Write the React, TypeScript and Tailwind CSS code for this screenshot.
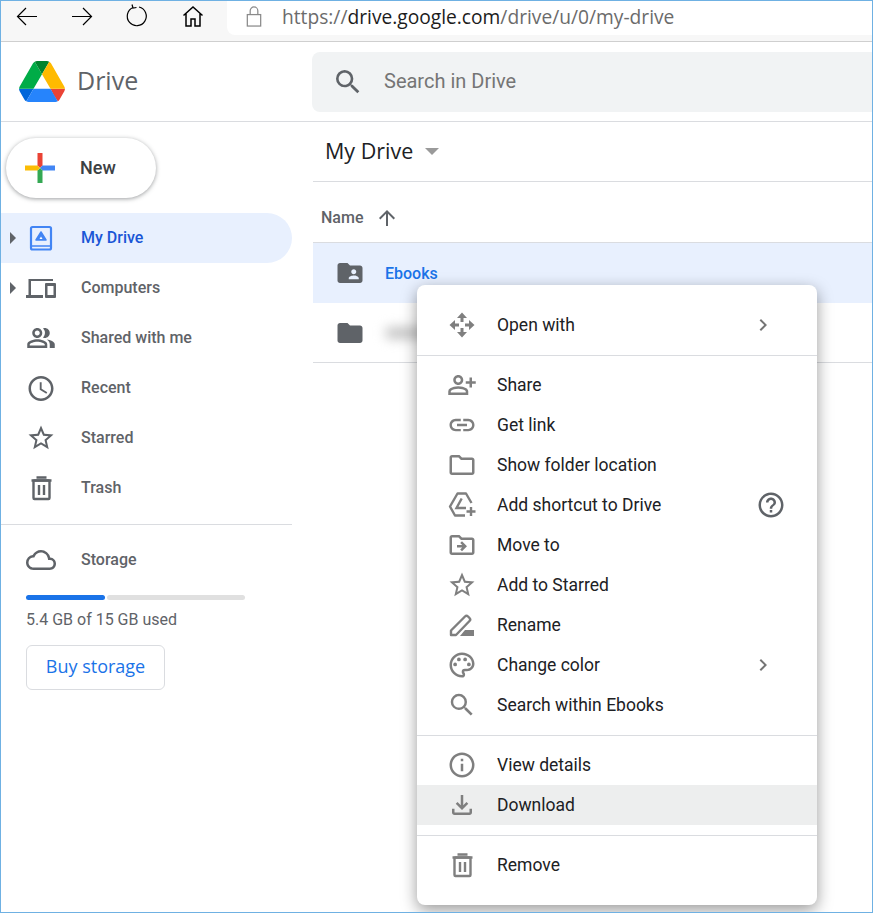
import type { ReactNode } from 'react';
import {
  MdAccessTime,
  MdArrowUpward,
  MdChevronRight,
  MdFolder,
  MdFolderShared,
  MdHelpOutline,
  MdInfoOutline,
  MdLink,
  MdOutlineCloud,
  MdOutlineDriveFileMove,
  MdOutlineFileDownload,
  MdOutlineFolder,
  MdOutlinePalette,
  MdOutlinePeopleAlt,
  MdOutlinePersonAddAlt,
  MdSearch,
  MdStarBorder,
} from 'react-icons/md';

function DriveLogo() {
  return (
    <svg viewBox="0 0 87.3 78" className="h-[41px] w-[46px]">
      <path d="m6.6 66.85 3.85 6.65c.8 1.4 1.95 2.5 3.3 3.3l13.75-23.8h-27.5c0 1.55.4 3.1 1.2 4.5z" fill="#0066da" />
      <path d="m43.65 25-13.75-23.8c-1.35.8-2.5 1.9-3.3 3.3l-25.4 44a9.06 9.06 0 0 0 -1.2 4.5h27.5z" fill="#00ac47" />
      <path d="m73.55 76.8c1.35-.8 2.5-1.9 3.3-3.3l1.6-2.75 7.65-13.25c.8-1.4 1.2-2.95 1.2-4.5h-27.502l5.852 11.5z" fill="#ea4335" />
      <path d="m43.65 25 13.75-23.8c-1.35-.8-2.9-1.2-4.5-1.2h-18.5c-1.6 0-3.15.45-4.5 1.2z" fill="#00832d" />
      <path d="m59.8 53h-32.3l-13.75 23.8c1.35.8 2.9 1.2 4.5 1.2h50.8c1.6 0 3.15-.45 4.5-1.2z" fill="#2684fc" />
      <path d="m73.4 26.5-12.7-22c-.8-1.4-1.95-2.5-3.3-3.3l-13.75 23.8 16.15 28h27.45c0-1.55-.4-3.1-1.2-4.5z" fill="#ffba00" />
    </svg>
  );
}

function NewPlus() {
  return (
    <svg viewBox="0 0 32 32" className="h-8 w-8">
      <path d="M13.5 1h5v12.5L16 16l-2.5-2.5z" fill="#ea4335" />
      <path d="M18.5 13.5H31v5H18.5L16 16z" fill="#4285f4" />
      <path d="M13.5 18.5 16 16l2.5 2.5V31h-5z" fill="#34a853" />
      <path d="M1 13.5h12.5L16 16l-2.5 2.5H1z" fill="#fbbc04" />
    </svg>
  );
}

function MyDriveIcon() {
  return (
    <svg viewBox="0 0 30 30" className="h-[30px] w-[30px]">
      <rect x="5" y="4" width="20" height="22.5" rx="1.5" fill="none" stroke="#4285f4" strokeWidth="2.2" />
      <path d="M5 23h20" stroke="#4285f4" strokeWidth="1.5" />
      <path d="M15 9l5 8h-10z" fill="#4285f4" stroke="#4285f4" strokeWidth="1.5" strokeLinejoin="round" />
      <path d="M15 13.5l1.500 2.500h-3z" fill="#fff" />
    </svg>
  );
}

function ComputersIcon() {
  return (
    <svg viewBox="0 0 30 30" className="h-[30px] w-[30px]" fill="#5f6368">
      <path d="M2.5 6H27v2H5v14h12v3H0v-3h2.5z" />
      <path fillRule="evenodd" d="M20 10h9a1 1 0 0 1 1 1v13a1 1 0 0 1-1 1h-9a1 1 0 0 1-1-1V11a1 1 0 0 1 1-1zm1.5 3v9h6v-9z" />
    </svg>
  );
}

function TrashIcon({ color }: { color: string }) {
  return (
    <svg viewBox="0 0 30 30" className="h-[30px] w-[30px]" fill="none" stroke={color} strokeWidth="2.4">
      <path d="M10.500 4.500h10M5.500 7.500h20" />
      <rect x="7.500" y="7.500" width="16" height="18.500" rx="1" />
      <path d="M13 12v10M18 12v10" />
    </svg>
  );
}

function OpenWithIcon() {
  return (
    <svg viewBox="0 0 30 30" className="h-[30px] w-[30px]" fill="#7f7f7f">
      <path d="M15 2.500l5 5.500h-3.500v4h-3V8H10z" />
      <path d="M15 27.500l5-5.500h-3.500v-4h-3v4H10z" />
      <path d="M2.500 15L8 10v3.500h4v3H8V20z" />
      <path d="M27.500 15L22 10v3.500h-4v3h4V20z" />
    </svg>
  );
}

function RenameIcon() {
  return (
    <svg viewBox="0 0 30 30" className="h-[30px] w-[30px]">
      <path
        d="M4 25v-4.500L18 6.500c1-1 2-1 3 0l1.500 1.500c1 1 1 2 0 3L9 25z"
        fill="none"
        stroke="#7f7f7f"
        strokeWidth="2.4"
        strokeLinejoin="round"
      />
      <path d="M13 26l5-6h9v6z" fill="#7f7f7f" />
    </svg>
  );
}

function ShortcutIcon() {
  return (
    <svg viewBox="0 0 30 30" className="h-[30px] w-[30px]" fill="none" stroke="#7f7f7f" strokeWidth="2.4">
      <path d="M24.500 13L19 3.500h-8.500L3 16.500l5 9h10" strokeLinejoin="round" />
      <path d="M14.700 8.500L9.500 18h9.500" />
      <path d="M24 17v9M19.500 21.500h9" />
    </svg>
  );
}

function Caret() {
  return <span className="ml-[9px] block h-0 w-0 border-y-[6px] border-l-[6px] border-y-transparent border-l-[#5f6368]" />;
}

function NavItem({ icon, label, caret, active }: { icon: ReactNode; label: string; caret?: boolean; active?: boolean }) {
  return (
    <div className={`flex h-[50px] w-[291px] items-center rounded-r-full ${active ? 'bg-[#e8f0fe]' : ''}`}>
      <div className="flex w-[25px] items-center">{caret && <Caret />}</div>
      <div className="flex w-[30px] items-center justify-center">{icon}</div>
      <span className={`ml-[25px] text-base font-medium ${active ? 'text-[#1a56d6]' : 'text-[#5f6368]'}`}>{label}</span>
    </div>
  );
}

function MenuItem({ icon, label, active, right }: { icon: ReactNode; label: string; active?: boolean; right?: ReactNode }) {
  return (
    <div className={`flex h-10 items-center pl-[30px] ${active ? 'bg-[#edeeee]' : ''}`}>
      <div className="flex w-[30px] items-center justify-center text-[#7f7f7f]">{icon}</div>
      <span className="ml-5 text-[17.5px] text-[#202124]">{label}</span>
      {right}
    </div>
  );
}

const Sub = () => <MdChevronRight size={24} className="absolute left-[334px] text-[#757575]" />;
const Divider = () => <div className="mb-[9px] mt-[10px] h-px bg-[#dadce0]" />;

export default function App() {
  return (
    <div className="relative flex h-[913px] w-[873px] flex-col overflow-hidden border border-[#6fb1e3] bg-white font-['Roboto',sans-serif]">
      {/* browser bar */}
      <div className="flex h-[41px] shrink-0 border-b border-[#cfcfcf] bg-[#f7f7f7]">
        <div className="flex w-[226px] items-start text-black">
          <svg viewBox="0 0 24 24" className="ml-[14px] mt-[3px] h-6 w-6" fill="none" stroke="currentColor" strokeWidth="1.2">
            <path d="M22 12.5H2.5M11 4l-8.5 8.500L11 21" />
          </svg>
          <svg viewBox="0 0 24 24" className="ml-[31px] mt-[3px] h-6 w-6" fill="none" stroke="currentColor" strokeWidth="1.2">
            <path d="M2 12.500h19.500M13 4l8.500 8.500L13 21" />
          </svg>
          <svg viewBox="0 0 24 24" className="ml-[31px] mt-[3px] h-6 w-6" fill="none" stroke="currentColor" strokeWidth="1.2">
            <path d="M8 3.500a9.500 9.500 0 1 0 6 -.5M7 .5l1 3.500 3.500 -.5" />
          </svg>
          <svg viewBox="0 0 24 24" className="ml-[32px] mt-[3px] h-6 w-6" fill="none" stroke="currentColor" strokeWidth="1.500">
            <path d="M2.500 11.500L12 3l9.500 8.500M5 9.500V22h5v-7h4v7h5V9.500" />
          </svg>
        </div>
        <div className="flex h-[34px] flex-1 items-center rounded-bl-lg bg-white">
          <svg viewBox="0 0 16 22" className="mb-[3px] ml-[19px] h-[21px] w-4" fill="none" stroke="#8a8a8a" strokeWidth="1.300">
            <rect x="1" y="9" width="14" height="12" />
            <path d="M4 9V5a4 4 0 0 1 8 0v4" />
          </svg>
          <span className="mb-[2px] ml-5 font-['Open_Sans',sans-serif] text-[19.2px] text-[#6b6b6b]">
            https://<span className="text-[#1c1c1c]">drive.google.com</span>/drive/u/0/my-drive
          </span>
        </div>
      </div>

      {/* app header */}
      <div className="flex h-[80px] shrink-0 items-center border-b border-[#dadce0]">
        <div className="flex w-[311px] items-center pl-[18px]">
          <DriveLogo />
          <span className="mb-[2px] ml-3 font-['Open_Sans',sans-serif] text-[25px] text-[#5f6368]">Drive</span>
        </div>
        <div className="flex h-[60px] flex-1 items-center rounded-l-lg bg-[#f1f3f4] pl-[20px]">
          <MdSearch size={32} className="text-[#5f6368]" />
          <span className="mb-[2px] ml-[20px] text-[20px] text-[#757575]">Search in Drive</span>
        </div>
      </div>

      <div className="flex flex-1">
        {/* sidebar */}
        <div className="w-[312px] shrink-0">
          <div className="ml-[5px] mt-4 flex h-[60px] w-[150px] items-center rounded-full bg-white pl-[18px] shadow-[0_1px_4px_rgba(60,64,67,0.5)]">
            <NewPlus />
            <span className="mb-px ml-[24px] text-lg font-medium text-[#3c4043]">New</span>
          </div>
          <div className="mt-[15px]">
            <NavItem active caret icon={<MyDriveIcon />} label="My Drive" />
            <NavItem caret icon={<ComputersIcon />} label="Computers" />
            <NavItem icon={<MdOutlinePeopleAlt size={32} className="text-[#5f6368]" />} label="Shared with me" />
            <NavItem icon={<MdAccessTime size={31} className="text-[#5f6368]" />} label="Recent" />
            <NavItem icon={<MdStarBorder size={30} className="text-[#5f6368]" />} label="Starred" />
            <NavItem icon={<TrashIcon color="#5f6368" />} label="Trash" />
          </div>
          <div className="mb-[10px] mt-[11px] h-px w-[291px] bg-[#dadce0]" />
          <NavItem icon={<MdOutlineCloud size={32} className="text-[#5f6368]" />} label="Storage" />
          <div className="ml-[25px] mt-[10px] flex h-[5px] w-[219px] gap-[2px]">
            <div className="h-full w-[79px] rounded-full bg-[#1a73e8]" />
            <div className="h-full flex-1 rounded-full bg-[#e0e0e0]" />
          </div>
          <div className="ml-[25px] mt-2 text-base text-[#5f6368]">5.4 GB of 15 GB used</div>
          <div className="ml-[25px] mt-[13px] flex h-[45px] w-[139px] items-center justify-center rounded-md border border-[#dadce0] pb-[3px] font-['Open_Sans',sans-serif] text-lg font-medium text-[#1a73e8]">
            Buy storage
          </div>
        </div>

        {/* file list */}
        <div className="flex-1">
          <div className="flex h-[60px] items-center border-b border-[#dadce0] pl-3">
            <span className="font-['Open_Sans',sans-serif] text-[21.5px] text-[#202124]">My Drive</span>
            <span className="ml-3 block h-0 w-0 border-x-[7px] border-t-[7px] border-x-transparent border-t-[#9a9a9a]" />
          </div>
          <div className="flex h-[61px] items-center border-b border-[#dadce0] pl-2 pt-3">
            <span className="text-base font-medium text-[#5f6368]">Name</span>
            <MdArrowUpward size={24} className="ml-3 text-[#5f6368]" />
          </div>
          <div className="flex h-[60px] items-center bg-[#e8f0fe] pl-[22px]">
            <MdFolderShared size={30} className="text-[#5f6368]" />
            <span className="ml-[20px] pt-px text-base font-medium text-[#1a73e8]">Ebooks</span>
          </div>
          <div className="flex h-[60px] items-center border-b border-[#dadce0] pl-[22px]">
            <MdFolder size={30} className="text-[#5f6368]" />
            <div className="ml-[20px] h-3 w-16 rounded-full bg-[#c4c4c4] blur-[6px]" />
          </div>
        </div>
      </div>

      {/* context menu */}
      <div className="absolute left-[416px] top-[284px] w-[400px] rounded-lg bg-white py-5 shadow-[0_5px_16px_rgba(0,0,0,0.4)]">
        <MenuItem icon={<OpenWithIcon />} label="Open with" right={<Sub />} />
        <Divider />
        <MenuItem icon={<MdOutlinePersonAddAlt size={30} />} label="Share" />
        <MenuItem icon={<MdLink size={30} />} label="Get link" />
        <MenuItem icon={<MdOutlineFolder size={30} />} label="Show folder location" />
        <MenuItem
          icon={<ShortcutIcon />}
          label="Add shortcut to Drive"
          right={<MdHelpOutline size={30} className="absolute left-[339px] text-[#5f6368]" />}
        />
        <MenuItem icon={<MdOutlineDriveFileMove size={30} />} label="Move to" />
        <MenuItem icon={<MdStarBorder size={30} />} label="Add to Starred" />
        <MenuItem icon={<RenameIcon />} label="Rename" />
        <MenuItem icon={<MdOutlinePalette size={30} />} label="Change color" right={<Sub />} />
        <MenuItem icon={<MdSearch size={30} />} label="Search within Ebooks" />
        <Divider />
        <MenuItem icon={<MdInfoOutline size={30} />} label="View details" />
        <MenuItem active icon={<MdOutlineFileDownload size={30} />} label="Download" />
        <Divider />
        <MenuItem icon={<TrashIcon color="#7f7f7f" />} label="Remove" />
      </div>
    </div>
  );
}
